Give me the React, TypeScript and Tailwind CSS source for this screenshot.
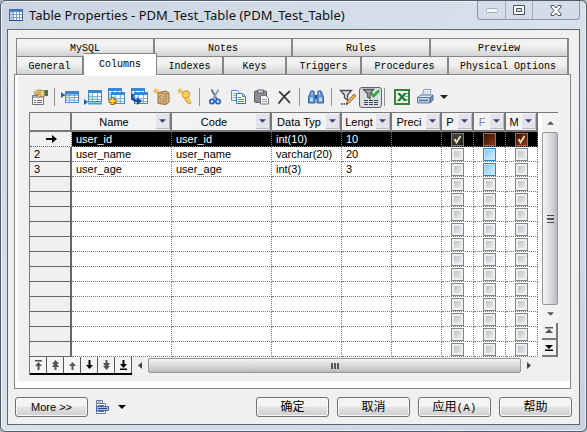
import type { ReactNode } from "react";

const sans = "font-['Liberation_Sans','Noto_Sans_CJK_SC',sans-serif]";

const topTabs = ["MySQL", "Notes", "Rules", "Preview"];

const tabs = [
  { label: "General", width: "w-[67px]" },
  { label: "Columns", width: "w-[73px]", active: true },
  { label: "Indexes", width: "w-[67px]" },
  { label: "Keys", width: "w-[63px]" },
  { label: "Triggers", width: "w-[75px]" },
  { label: "Procedures", width: "w-[87px]" },
  { label: "Physical Options", width: "flex-1" },
];

const columns = [
  { label: "Name", width: "w-[100px]" },
  { label: "Code", width: "w-[100px]" },
  { label: "Data Typ", width: "w-[70px]" },
  { label: "Lengt", width: "w-[50px]" },
  { label: "Preci", width: "w-[50px]" },
  { label: "P", width: "w-[32px]" },
  { label: "F", width: "w-[32px]", muted: true },
  { label: "M", width: "w-[32px]" },
];

const records = [
  ["user_id", "user_id", "int(10)", "10", ""],
  ["user_name", "user_name", "varchar(20)", "20", ""],
  ["user_age", "user_age", "int(3)", "3", ""],
];

const ROW_COUNT = 15;

function Icon({ children }: { children: ReactNode }) {
  return (
    <svg width="18" height="18" viewBox="0 0 18 18" fill="none" aria-hidden="true">
      {children}
    </svg>
  );
}

function Down({ className = "" }: { className?: string }) {
  return (
    <svg width="8" height="4" viewBox="0 0 8 4" className={className} aria-hidden="true">
      <path d="M0 0h8L4 4z" fill="currentColor" />
    </svg>
  );
}

function TableGlyph({ x, y }: { x: number; y: number }) {
  return (
    <g transform={`translate(${x} ${y})`}>
      <rect x=".5" y=".5" width="13" height="11" fill="#fff" stroke="#4c86c6" />
      <path d="M0 0h14v3H0z" fill="#3a86cf" />
      <path d="M1 6.500h12M1 9.500h12M4.500 3v8M9.500 3v8" stroke="#7fb3e2" />
      <path d="M1 4h3v2H1zM1 7h3v2H1zM5 7h4v2H5z" fill="#c9e4fa" />
    </g>
  );
}

function Spark({ x, y }: { x: number; y: number }) {
  return (
    <path
      d="M3 0v6M0 3h6M1 1l4 4M5 1L1 5"
      transform={`translate(${x} ${y})`}
      stroke="#efb13c"
      strokeWidth=".9"
    />
  );
}

const PropertiesIcon = (
  <Icon>
    <path d="M1.500 7.500h11v9h-11z" fill="#fff" stroke="#70747c" />
    <path d="M2 8h10v2H2z" fill="#a9b7cc" />
    <path d="M3 12.500h2M6 12.500h5M3 14.500h2M6 14.500h5" stroke="#646b77" />
    <path d="M3 4.500L7 2l5 .5 2 3-1 3.500-3-1-2 1.500-2-1 1-3-3 1z" fill="#f4cd7a" stroke="#9a6b25" strokeWidth=".8" />
    <path d="M13 2h4v6h-3z" fill="#3f7a55" />
    <path d="M6 5l4-1M7 7l3-1" stroke="#a77a33" strokeWidth=".8" />
  </Icon>
);

const InsertRowIcon = (
  <Icon>
    <TableGlyph x={4} y={3} />
    <path d="M0 4l4 3-4 3z" fill="#1b64ad" />
    <path d="M3 7h14" stroke="#2b75bd" />
  </Icon>
);

const AddRowIcon = (
  <Icon>
    <TableGlyph x={4} y={2} />
    <path d="M4 15.500h14" stroke="#3aa0d8" strokeWidth="2" />
    <path d="M0 11l4 3-4 3z" fill="#1b64ad" />
  </Icon>
);

const AddTableIcon = (
  <Icon>
    <TableGlyph x={1} y={0} />
    <TableGlyph x={4} y={4} />
    <path d="M5.500 9v8M1.500 13h8" stroke="#9b6a12" strokeWidth="4" />
    <path d="M5.500 10v6M2.500 13h6" stroke="#ffd94c" strokeWidth="2" />
  </Icon>
);

const ReplicateIcon = (
  <Icon>
    <TableGlyph x={1} y={0} />
    <TableGlyph x={4} y={4} />
    <path d="M3 6c-2 4 0 7 5 7" stroke="#174d9b" strokeWidth="2.400" />
    <path d="M7 9.500l5 3.500-5 4z" fill="#174d9b" />
  </Icon>
);

const DomainIcon = (
  <Icon>
    <path d="M5 4.500l8-1.500 3 2v9l-3 2.500-8-1z" fill="#d6b47c" stroke="#967040" />
    <path d="M6 5l7 1v10M13 6l3-1" stroke="#a98050" />
    <path d="M7 8l4 .5v2L7 10zM7 12l4 .5v1.500L7 13.500z" fill="#fff4d6" stroke="#967040" strokeWidth=".7" />
    <Spark x={0} y={0} />
  </Icon>
);

const KeyIcon = (
  <Icon>
    <circle cx="10" cy="6.500" r="3.700" fill="#ffd768" stroke="#ce8b1d" />
    <circle cx="11" cy="5.500" r="1.200" fill="#fff" stroke="#ce8b1d" strokeWidth=".6" />
    <path d="M9 10l2.500-.5L15 14l-1 2-2-.5v-1.500h-1.500v-2H9z" fill="#ffd768" stroke="#ce8b1d" strokeWidth=".8" />
    <Spark x={1} y={0} />
  </Icon>
);

const CutIcon = (
  <Icon>
    <path d="M5.500 1.500l5.500 10" stroke="#5d7188" strokeWidth="1.800" />
    <path d="M12.500 1.500L7 11.500" stroke="#8ba0b7" strokeWidth="1.800" />
    <circle cx="6" cy="13.500" r="2.200" stroke="#2166c2" strokeWidth="1.700" />
    <circle cx="12" cy="13.500" r="2.200" stroke="#2166c2" strokeWidth="1.700" />
  </Icon>
);

const CopyIcon = (
  <Icon>
    <path d="M2.500 2.500h6l2 2v8h-8z" fill="#eaf3fd" stroke="#5b8dca" />
    <path d="M4 5.500h4M4 7.500h4M4 9.500h4" stroke="#8ab1df" />
    <path d="M7.500 5.500h6l3 3v7h-9z" fill="#fff" stroke="#3e73ba" />
    <path d="M13.500 5.500v3h3M9 9.500h3M9 11.500h6M9 13.500h6" stroke="#568bcd" />
  </Icon>
);

const PasteIcon = (
  <Icon>
    <rect x="2.500" y="3" width="12" height="11.500" rx="1" fill="#8d8e91" stroke="#5f6063" />
    <path d="M5.500 2h6v3h-6z" fill="#d3d3d3" stroke="#5f6063" />
    <path d="M8.500 7.500h5l3 3v5.500h-8z" fill="#fff" stroke="#707276" />
    <path d="M10 11.500h5M10 13.500h5" stroke="#9a9ca0" />
  </Icon>
);

const DeleteIcon = (
  <Icon>
    <path d="M4.500 4c3 2 6 6 10 10.500M14.500 3.500C10 7 7 11 4 15" stroke="#343638" strokeWidth="1.700" strokeLinecap="round" />
  </Icon>
);

const FindIcon = (
  <Icon>
    <path d="M4 3h3v3l1 2v7H1.500V9z" fill="#5e94d6" stroke="#2f5f9f" />
    <path d="M11 3h3l2.500 6v6H10V8l1-2z" fill="#5e94d6" stroke="#2f5f9f" />
    <path d="M8 7h2v4H8z" fill="#254f8c" />
    <path d="M3 9.500h3v4H3zM12 9.500h3v4h-3z" fill="#b7d5f6" />
    <path d="M5 4v3M12.500 4v3" stroke="#b9d5f5" />
  </Icon>
);

const FilterEditIcon = (
  <Icon>
    <path d="M1.500 2.500h11L8.500 7v5l-3-2V7z" fill="#d9dadd" stroke="#4c4f55" strokeWidth="1.300" />
    <path d="M8 14l7-8 2 2-7 7-3 1z" fill="#f1b75a" stroke="#8e5d22" strokeWidth=".9" />
    <path d="M2 16h1.500M4.500 16H6M7 16h1.500" stroke="#333" strokeWidth="1.500" />
  </Icon>
);

const FilterOnIcon = (
  <Icon>
    <path d="M1.500 1.500h10L8 5.500v5L5.500 9V5.500z" fill="#a8a5a9" stroke="#55585e" strokeWidth="1.300" />
    <path d="M9 5l2.500 3L17 2.500" stroke="#2daa46" strokeWidth="2.600" />
    <path d="M2 12.500h4M7 12.500h4M12 12.500h4M2 14.500h4M7 14.500h4M12 14.500h4M2 16.500h4M7 16.500h4M12 16.500h4" stroke="#34465e" />
  </Icon>
);

const ExcelIcon = (
  <Icon>
    <path d="M2 2h14v14H2z" fill="#e7f5df" stroke="#388344" strokeWidth="2" />
    <path d="M12 5.500h3M12 8.500h3M12 11.500h3" stroke="#79b878" />
    <path d="M4 5h3l2 2.500L11 5h3l-3.500 4 3.500 4h-3L9 10.500 7 13H4l3.500-4z" fill="#22743a" />
  </Icon>
);

const PrintIcon = (
  <Icon>
    <path d="M6 8l2-6.500h7L13.500 8z" fill="#fff" stroke="#7f99b6" />
    <path d="M8 4h5M7.500 6h5" stroke="#a0b6d0" />
    <path d="M1.500 9.500L5 7h12l-3 3z" fill="#dce9f6" stroke="#637c9c" />
    <path d="M1.500 9.500H14v5.500H1.500z" fill="#bad1e9" stroke="#637c9c" />
    <path d="M14 10l3-3v5l-3 3z" fill="#6f91b8" stroke="#56718f" />
    <path d="M3 12.500h9" stroke="#55799f" strokeWidth="1.500" />
  </Icon>
);

const toolGroups: { gap: string; tools: { label: string; icon: ReactNode; pressed?: boolean }[] }[] = [
  { gap: "mx-[3px]", tools: [{ label: "Properties", icon: PropertiesIcon }] },
  {
    gap: "mx-[3px]",
    tools: [
      { label: "Insert a Row", icon: InsertRowIcon },
      { label: "Add a Row", icon: AddRowIcon },
      { label: "Add Columns", icon: AddTableIcon },
      { label: "Replicate Columns", icon: ReplicateIcon },
      { label: "Create Domain", icon: DomainIcon },
      { label: "Create Key", icon: KeyIcon },
    ],
  },
  {
    gap: "mx-1",
    tools: [
      { label: "Cut", icon: CutIcon },
      { label: "Copy", icon: CopyIcon },
      { label: "Paste", icon: PasteIcon },
      { label: "Delete", icon: DeleteIcon },
    ],
  },
  { gap: "mx-1", tools: [{ label: "Find a Row", icon: FindIcon }] },
  {
    gap: "mx-[2px]",
    tools: [
      { label: "Customize Columns and Filter", icon: FilterEditIcon },
      { label: "Enable Filter", icon: FilterOnIcon, pressed: true },
    ],
  },
];

function ToolButton({ label, icon, pressed }: { label: string; icon: ReactNode; pressed?: boolean }) {
  return (
    <button
      type="button"
      aria-label={label}
      aria-pressed={pressed}
      className={`flex h-[21px] w-[23px] shrink-0 items-center justify-center ${
        pressed ? "rounded-[3px] border border-[#5f6468] bg-[#dddee0]" : ""
      }`}
    >
      {icon}
    </button>
  );
}

function Toolbar() {
  return (
    <div role="toolbar" aria-label="Columns" className="flex h-9 items-center pt-[6px] pl-[10px]">
      {toolGroups.map((group) => (
        <div key={group.tools[0].label} className="flex items-center">
          {group.tools.map((tool) => (
            <ToolButton key={tool.label} {...tool} />
          ))}
          <span className={`h-[18px] w-px bg-[#8e9094] ${group.gap}`} />
        </div>
      ))}
      <div className="flex items-center pl-[3px]">
        <ToolButton label="Export to Excel" icon={ExcelIcon} />
        <ToolButton label="Print" icon={PrintIcon} />
        <button type="button" aria-label="Print options" className="px-1 text-[#222]">
          <Down />
        </button>
      </div>
    </div>
  );
}

function CellBox({ row, column }: { row: number; column: number }) {
  const checked = row === 0 && column !== 1;
  let look = "border-[#838485] from-[#b4b8bb] to-[#f4f4f4]";
  if (row === 0) {
    look = column === 0 ? "border-[#7d7d75] from-[#484840] to-[#25251f]" : "border-[#b4683a] from-[#39120a] to-[#8c3b18]";
  } else if (row < 3 && column === 1) {
    look = "border-[#3c7fb1] from-[#7cc2f2] to-[#d9f1fe]";
  }
  let ring = "shadow-[inset_0_0_0_2px_#eeeff0]";
  if (row === 0) {
    ring = "shadow-none";
  } else if (row < 3 && column === 1) {
    ring = "shadow-[inset_0_0_0_1px_#c4e5fa]";
  }
  return (
    <span className="mx-auto grid size-[13px]">
      <input
        type="checkbox"
        defaultChecked={checked}
        aria-label={`Row ${row + 1} ${["Primary", "Foreign", "Mandatory"][column]}`}
        className={`col-start-1 row-start-1 size-[13px] appearance-none border bg-linear-to-br ${look} ${ring}`}
      />
      {checked && (
        <svg width="13" height="13" viewBox="0 0 13 13" className="pointer-events-none col-start-1 row-start-1" aria-hidden="true">
          <path d="M3.500 6l2 3.500L9.500 3" fill="none" stroke="#e8d9b0" strokeWidth="1.900" />
        </svg>
      )}
    </span>
  );
}

function DataTable() {
  return (
    <table className="w-[508px] table-fixed border-separate border-spacing-0 bg-white text-[11px] leading-[14px]">
      <colgroup>
        <col className="w-[42px]" />
        {columns.map((c) => (
          <col key={c.label} className={c.width} />
        ))}
      </colgroup>
      <thead>
        <tr className="h-[19px]">
          <th aria-label="Row" className="border-r-2 border-b-2 border-[#77787a] bg-[#f0f0f0] p-0" />
          {columns.map((c) => (
            <th key={c.label} scope="col" className="border-r-2 border-b-2 border-[#77787a] bg-[#f3f3f3] p-0 font-normal">
              <div className="flex h-[17px] items-center">
                <span className={`flex-1 overflow-hidden text-center whitespace-nowrap ${c.muted ? "text-[#7c82a8]" : ""}`}>
                  {c.label}
                </span>
                <button
                  type="button"
                  aria-label={`Filter ${c.label}`}
                  className="flex h-[15px] w-[14px] shrink-0 items-center justify-center border-r border-b border-[#b9bbc4] bg-[#e4e5ec] text-[#40436b]"
                >
                  <Down className="w-[7px]" />
                </button>
              </div>
            </th>
          ))}
        </tr>
      </thead>
      <tbody>
        {Array.from({ length: ROW_COUNT }, (_, row) => {
          const selected = row === 0;
          const values = records[row] ?? ["", "", "", "", ""];
          const cell = `h-[15px] border-r border-b border-dotted border-[#77787a] p-0 ${selected ? "bg-black text-white" : ""}`;
          return (
            <tr key={row}>
              <th
                scope="row"
                className={`h-[15px] border-b border-[#66676a] bg-[#f0f0f0] p-0 pl-1 text-left font-normal ${
                  selected ? "border-r border-dotted" : "border-r-2"
                }`}
              >
                {selected && (
                  <svg width="11" height="8" viewBox="0 0 11 8" className="ml-3" aria-label="Current row">
                    <path d="M0 3h6V0l5 4-5 4V5H0z" fill="#000" />
                  </svg>
                )}
                {(row === 1 || row === 2) && row + 1}
              </th>
              {values.map((value, i) => (
                <td key={i} className={`${cell} pl-1 whitespace-nowrap`}>
                  {value}
                </td>
              ))}
              {[0, 1, 2].map((i) => (
                <td key={i} className={cell}>
                  <CellBox row={row} column={i} />
                </td>
              ))}
            </tr>
          );
        })}
      </tbody>
    </table>
  );
}

function VerticalScroll() {
  return (
    <div className="flex w-4 shrink-0 flex-col items-center bg-[#f2f2f2] text-[#55565a]">
      <button type="button" aria-label="Scroll up" className="flex h-[19px] w-full items-center justify-center">
        <Down className="w-[7px] rotate-180" />
      </button>
      <div className="flex w-full flex-1 items-center justify-center rounded-[2px] border border-[#97989c] bg-linear-to-r from-[#f4f4f4] via-[#dedfe1] to-[#b9bac0]">
        <span className="h-[8px] w-[7px] border-y border-[#44464a] py-[2px]">
          <span className="block h-[2px] border-y border-[#55575b]" />
        </span>
      </div>
      <button type="button" aria-label="Scroll down" className="flex h-[18px] w-full items-center justify-center">
        <Down className="w-[7px]" />
      </button>
      <button type="button" aria-label="First page" className="flex h-[17px] w-full items-center justify-center border-r-2 border-b-2 border-[#77787a]">
        <svg width="8" height="7" viewBox="0 0 8 7" aria-hidden="true">
          <path d="M0 0h8v1.500H0zM4 2l4 4H0z" fill="#555" />
        </svg>
      </button>
      <button type="button" aria-label="Last page" className="flex h-[17px] w-full items-center justify-center border-r-2 border-b-2 border-[#77787a]">
        <svg width="8" height="7" viewBox="0 0 8 7" aria-hidden="true">
          <path d="M0 5.500h8V7H0zM0 1h8L4 5z" fill="#000" />
        </svg>
      </button>
    </div>
  );
}

const moveButtons = [
  { label: "Move to top", d: "M1 0h7v1.500H1zM4.500 2L8 6H5.500v4h-2V6H1z", color: "text-[#555]" },
  { label: "Move up a page", d: "M4.500 0L8 4H6l2 3H5.500v3h-2V7H1l2-3H1z", color: "text-[#555]" },
  { label: "Move up", d: "M4.500 2L8 6H5.500v4h-2V6H1z", color: "text-[#555]" },
  { label: "Move down", d: "M4.500 9L8 5H5.500V0h-2v5H1z", color: "text-black" },
  { label: "Move down a page", d: "M4.500 10L8 6H6l2-3H5.500V0h-2v3H1l2 3H1z", color: "text-[#555]" },
  { label: "Move to bottom", d: "M1 8.500h7V10H1zM4.500 8L8 4H5.500V0h-2v4H1z", color: "text-black" },
];

function BottomBar() {
  return (
    <div className="flex h-[18px] items-start pr-4">
      <div className="flex border-b-2 border-black">
        {moveButtons.map((b) => (
          <button
            key={b.label}
            type="button"
            aria-label={b.label}
            className={`flex h-[16px] w-[17px] items-center justify-center border-r border-[#55565a] bg-[#f4f4f4] ${b.color}`}
          >
            <svg width="9" height="10" viewBox="0 0 9 10" aria-hidden="true">
              <path d={b.d} fill="currentColor" />
            </svg>
          </button>
        ))}
      </div>
      <button type="button" aria-label="Scroll left" className="flex h-4 w-4 shrink-0 items-center justify-center">
        <svg width="4" height="7" viewBox="0 0 4 7" aria-hidden="true">
          <path d="M4 0v7L0 3.500z" fill="#444" />
        </svg>
      </button>
      <div className="mt-px flex h-[15px] flex-1 items-center justify-center rounded-[2px] border border-[#97989c] bg-linear-to-b from-[#f1f1f1] via-[#dadada] to-[#bbbbbc]">
        <span className="h-[6px] w-[8px] border-x-2 border-[#55575b] px-px">
          <span className="mx-auto block h-full w-[2px] bg-[#55575b]" />
        </span>
      </div>
      <button type="button" aria-label="Scroll right" className="mr-[5px] flex h-4 w-4 shrink-0 items-center justify-center">
        <svg width="4" height="7" viewBox="0 0 4 7" aria-hidden="true">
          <path d="M0 0v7l4-3.500z" fill="#444" />
        </svg>
      </button>
    </div>
  );
}

function PushButton({ children, size = "text-[12px]" }: { children: ReactNode; size?: string }) {
  return (
    <button
      type="button"
      className={`h-5 w-[73px] shrink-0 rounded-[3px] border border-[#707070] bg-linear-to-b from-[#f4f4f4] from-45% via-[#e3e3e3] via-50% to-[#cfcfcf] leading-[16px] whitespace-nowrap shadow-[inset_0_0_0_1px_#fafafa] ${size}`}
    >
      {children}
    </button>
  );
}

function TitleBar() {
  return (
    <header className="flex h-7 items-start justify-between pl-[2px]">
      <div className="flex items-center gap-[6px] pt-[5px]">
        <svg width="14" height="14" viewBox="0 0 14 14" aria-hidden="true">
          <path d="M.5 1.500h13v11H.5z" fill="#fff" stroke="#4269a8" />
          <path d="M1 2h12v2H1z" fill="#4f83cc" />
          <path d="M1 4h3v8H1z" fill="#b9d0f0" />
          <path d="M4.500 4v8M7.500 4v8M10.500 4v8M1 6.500h12M1 9.500h12" stroke="#7d9fce" />
          <path d="M0 12.500h14" stroke="#2a4c87" />
        </svg>
        <h1 className="font-['Noto_Sans','Open_Sans',sans-serif] text-[13px] leading-[18px] whitespace-nowrap text-[#111]">
          Table Properties - PDM_Test_Table (PDM_Test_Table)
        </h1>
      </div>
      <div className="flex h-[19px] overflow-hidden rounded-b-[4px] border border-t-0 border-[#8a96a5] bg-[#d3dce7]">
        <button type="button" aria-label="Minimize" className="flex w-7 items-center justify-center border-r border-[#a3aebb]">
          <svg width="12" height="6" viewBox="0 0 12 6" aria-hidden="true">
            <rect x=".5" y="1.500" width="11" height="4" rx="1" fill="#f3f5f8" stroke="#a5afbb" />
          </svg>
        </button>
        <button type="button" aria-label="Maximize" className="flex w-[27px] items-center justify-center border-r border-[#a3aebb]">
          <svg width="12" height="10" viewBox="0 0 12 10" aria-hidden="true">
            <path d="M.5.5h11v9H.5z" fill="#fff" stroke="#4b535e" />
            <path d="M3.500 3.500h5v3h-5z" fill="#d3dce7" stroke="#4b535e" />
          </svg>
        </button>
        <button type="button" aria-label="Close" className="flex w-[46px] items-center justify-center">
          <svg width="12" height="11" viewBox="0 0 12 11" aria-hidden="true">
            <path d="M1 .5h3l2 2.500L8 .5h3v1.500L8 5.500 11 9v1.500H8L6 8l-2 2.500H1V9l3-3.500L1 2z" fill="#fff" stroke="#4b535e" />
          </svg>
        </button>
      </div>
    </header>
  );
}

const tabFace =
  "border-t border-r-2 border-[#85868a] bg-linear-to-b from-[#f2f2f2] from-40% to-[#d2d2d2] text-center";

export default function App() {
  return (
    <div className="min-h-screen bg-[#a9b2bd]">
      <main
        className={`flex min-h-screen w-full flex-col rounded-[6px] border border-[#555c65] bg-linear-to-br from-[#cbd5e1] via-[#d9e1eb] to-[#c8d2df] px-[6px] pb-[6px] text-black shadow-[inset_0_0_0_1px_#edf1f6] ${sans}`}
      >
        <TitleBar />
        <section className="flex flex-1 flex-col border border-[#5d656f] bg-[#f0f0f0] pt-2 pb-[6px]">
          <div role="tablist" className="pr-[10px] pl-2 font-['Liberation_Mono',monospace] text-[10px] leading-[14px]">
            <div className="flex border-l border-[#85868a]">
              {topTabs.map((label) => (
                <button key={label} type="button" role="tab" aria-selected={false} className={`h-[18px] flex-1 pt-[2px] ${tabFace}`}>
                  {label}
                </button>
              ))}
            </div>
            <div className="flex items-end border-l border-[#85868a]">
              {tabs.map((tab) => (
                <button
                  key={tab.label}
                  type="button"
                  role="tab"
                  aria-selected={!!tab.active}
                  className={
                    tab.active
                      ? `z-10 -mt-[3px] -mb-px h-[22px] border-t border-r border-[#85868a] bg-white text-center ${tab.width}`
                      : `h-[18px] pt-[2px] ${tabFace} ${tab.width}`
                  }
                >
                  {tab.label}
                </button>
              ))}
            </div>
          </div>
          <div role="tabpanel" className="mr-2 ml-[6px] border border-[#85868a] bg-white pt-px pb-[7px] pl-[3px]">
            <div className="bg-[#f0f0f0] pb-[6px]">
              <Toolbar />
              <div className="mr-3 ml-[11px] border-t border-l border-[#77787a]">
                <div className="flex justify-between bg-white">
                  <DataTable />
                  <VerticalScroll />
                </div>
                <BottomBar />
              </div>
            </div>
          </div>
          <footer className="flex items-center justify-between pt-2 pr-[7px] pl-[7px]">
            <div className="flex items-center">
              <PushButton size="text-[11px]">More &gt;&gt;</PushButton>
              <button type="button" aria-label="Menu" className="ml-[7px] flex items-center gap-2">
                <svg width="15" height="16" viewBox="0 0 15 16" aria-hidden="true">
                  <path d="M1.500 1.500h6v3h-6zM1.500 4.500h9v10h-9z" fill="#fff" stroke="#66799e" />
                  <path d="M3 3h3M3 6.500h6M3 12.500h6" stroke="#59709c" />
                  <path d="M1.500 7.500h12v4h-12z" fill="#aebfe8" stroke="#4962ad" />
                  <path d="M3 9.500h9" stroke="#2c478f" />
                </svg>
                <Down />
              </button>
            </div>
            <div className="flex gap-2">
              <PushButton>确定</PushButton>
              <PushButton>取消</PushButton>
              <PushButton>
                应用<span className="font-['Liberation_Mono',monospace] text-[11px]">(A)</span>
              </PushButton>
              <PushButton>帮助</PushButton>
            </div>
          </footer>
        </section>
      </main>
    </div>
  );
}
